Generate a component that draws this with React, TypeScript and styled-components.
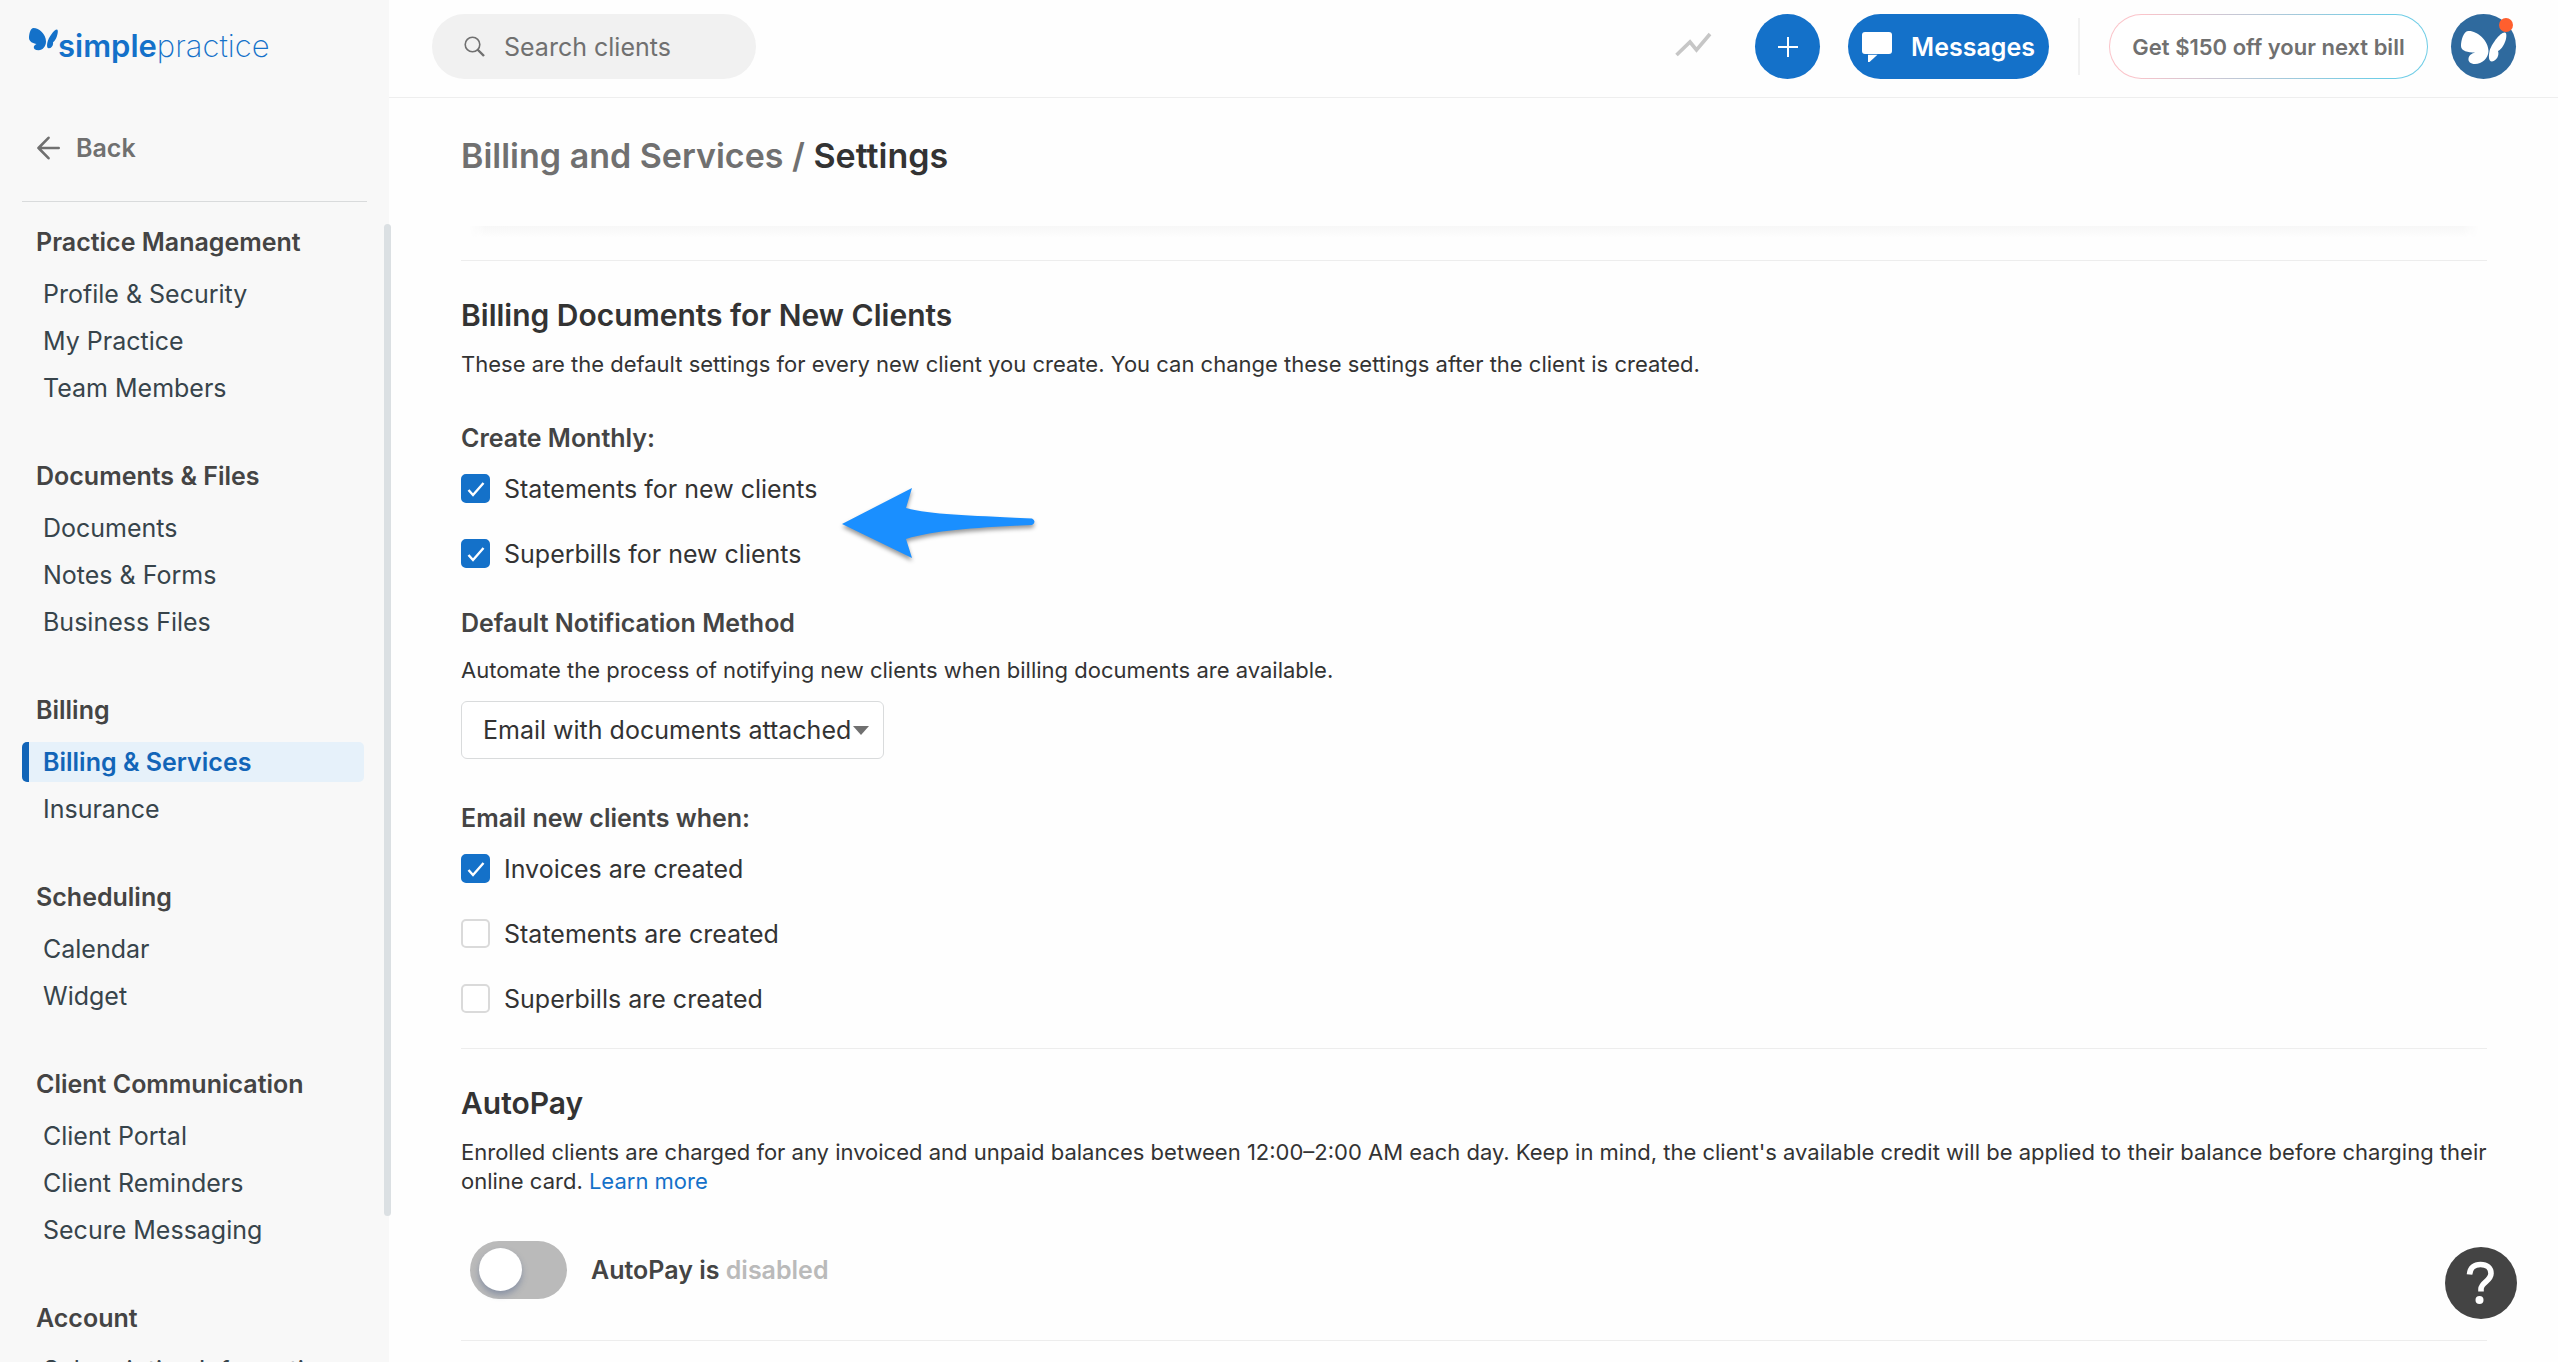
import React from "react";
import styled, { createGlobalStyle, css } from "styled-components";

const sans = '"Inter", "Noto Sans", "Liberation Sans", sans-serif';
const blue = "#1471c9";

const GlobalStyle = createGlobalStyle`
  *, *::before, *::after { box-sizing: border-box; }
  body {
    margin: 0;
    background: #fefefe;
    color: #333;
    font-family: ${sans};
    font-size: 25px;
    -webkit-font-smoothing: antialiased;
  }
  button, input, select { font: inherit; color: inherit; }
  h1, h2, h3, p, ul { margin: 0; padding: 0; }
  ul { list-style: none; }
`;

const Shell = styled.div`
  display: grid;
  grid-template-columns: 389px minmax(0, 1fr);
  height: 100vh;
  overflow: hidden;
`;

/* ---------- Sidebar ---------- */

const Sidebar = styled.aside`
  position: relative;
  display: flex;
  flex-direction: column;
  min-height: 0;
  background: #f8f8f8;
`;

const Brand = styled.a`
  display: flex;
  height: 98px;
  padding: 28px 0 0 29px;
  color: ${blue};
  text-decoration: none;
`;

const Wordmark = styled.span`
  font-size: 31px;
  line-height: 36px;
  font-weight: 200;

  strong { font-weight: 600; }
`;

const BackLink = styled.a`
  display: flex;
  align-items: center;
  gap: 16px;
  height: 104px;
  margin: 0 22px;
  padding: 0 15px 4px;
  border-bottom: 1px solid #d9dbdc;
  color: #707070;
  font-weight: 600;
  text-decoration: none;
`;

const Nav = styled.nav`
  flex: 1;
  min-height: 0;
  display: flex;
  flex-direction: column;
  gap: 48px;
  padding: 20px 25px 0 22px;
  overflow: hidden;
`;

const NavHeading = styled.h2`
  padding-left: 14px;
  margin-bottom: 12px;
  font-size: 25px;
  line-height: 40px;
  font-weight: 600;
  color: #444;
`;

const NavList = styled.ul`
  display: grid;
  gap: 7px;
`;

const NavLink = styled.a<{ $active?: boolean }>`
  display: block;
  padding-left: 14px;
  border-left: 7px solid transparent;
  border-radius: 5px;
  line-height: 40px;
  color: #37444b;
  text-decoration: none;
  white-space: nowrap;
  ${(p) =>
    p.$active &&
    css`
      border-left-color: #1265b8;
      background: #e6f1fa;
      color: #1265b8;
      font-weight: 600;
    `}
`;

const ScrollThumb = styled.div`
  position: absolute;
  z-index: 1;
  top: 224px;
  right: -2px;
  width: 7px;
  height: 992px;
  border-radius: 4px;
  background: #dbe0e3;
`;

/* ---------- Top bar ---------- */

const Main = styled.div`
  display: flex;
  flex-direction: column;
  min-height: 0;
`;

const TopBar = styled.header`
  flex: none;
  display: flex;
  align-items: flex-start;
  height: 98px;
  padding: 14px 42px 0 43px;
  border-bottom: 1px solid #eee;
`;

const SearchBox = styled.label`
  display: flex;
  align-items: center;
  gap: 19px;
  width: 324px;
  height: 65px;
  padding: 0 24px 0 32px;
  margin-right: auto;
  border-radius: 33px;
  background: #f1f1f1;
  color: #707070;
`;

const SearchInput = styled.input`
  flex: 1;
  min-width: 0;
  padding: 0;
  border: 0;
  outline: 0;
  background: none;

  &::placeholder { color: #707070; opacity: 1; }
`;

const TrendButton = styled.button`
  display: grid;
  place-items: center;
  height: 62px;
  margin-right: 43px;
  padding: 0;
  border: 0;
  background: none;
`;

const AddButton = styled.button`
  display: grid;
  place-items: center;
  width: 65px;
  height: 65px;
  margin-right: 28px;
  padding: 0;
  border: 0;
  border-radius: 50%;
  background: ${blue};
`;

const MessagesButton = styled.button`
  display: flex;
  align-items: center;
  justify-content: center;
  gap: 19px;
  width: 201px;
  height: 65px;
  padding: 0;
  border: 0;
  border-radius: 33px;
  background: ${blue};
  color: #fff;
  font-weight: 600;
`;

const Divider = styled.div`
  width: 2px;
  height: 57px;
  margin: 4px 29px 0;
  background: #f1f1f1;
`;

const PromoButton = styled.button`
  width: 319px;
  height: 65px;
  margin-right: 23px;
  padding: 0;
  border: 1px solid transparent;
  border-radius: 33px;
  background:
    linear-gradient(#fff, #fff) padding-box,
    linear-gradient(100deg, #fbc4ca 10%, #6fcde6 85%) border-box;
  color: #707070;
  font-size: 22px;
  font-weight: 600;
  white-space: nowrap;
`;

const Avatar = styled.button`
  position: relative;
  width: 65px;
  height: 65px;
  padding: 0;
  border: 0;
  border-radius: 50%;
  background: #2f6a9e;

  svg { display: block; }
`;

const Badge = styled.span`
  position: absolute;
  top: 4px;
  right: 3px;
  width: 14px;
  height: 14px;
  border-radius: 50%;
  background: #ff5f2e;
`;

/* ---------- Content ---------- */

const TitleBar = styled.div`
  flex: none;
  height: 128px;
  padding: 34px 72px 0;
`;

const PageTitle = styled.h1`
  font-size: 34px;
  line-height: 48px;
  font-weight: 600;
  color: #333;

  span { color: #707070; }
`;

const Scroller = styled.main`
  flex: 1;
  min-height: 0;
  padding: 0 71px 0 72px;
  overflow: hidden;
`;

const ScrollShade = styled.div`
  height: 34px;
  padding: 0 8px;

  &::before {
    content: "";
    display: block;
    height: 12px;
    background: linear-gradient(#f7f7f7, #fefefe);
    mask-image: linear-gradient(90deg, transparent, #000 16px calc(100% - 16px), transparent);
  }
`;

const Section = styled.section`
  padding: 30px 0 35px;
  border-top: 1px solid #ededed;
`;

const SectionTitle = styled.h2`
  font-size: 30px;
  line-height: 48px;
  font-weight: 600;
  color: #333;
`;

const Text = styled.p`
  padding-top: 11px;
  font-size: 22px;
  line-height: 29px;
`;

const TextLink = styled.a`
  color: ${blue};
  text-decoration: none;
`;

const Group = styled.fieldset`
  position: relative;
  min-width: 0;
  margin: 43px 0 0;
  padding: 0;
  border: 0;
  display: grid;
  gap: 36px;
`;

const groupTitle = css`
  display: block;
  padding: 0;
  font-size: 25px;
  line-height: 32px;
  font-weight: 600;
  color: #444;
`;

const Legend = styled.legend`
  ${groupTitle}
  margin: 0 0 20px;
`;

const FieldLabel = styled.label`
  ${groupTitle}
  margin: 39px 0 6px;
`;

const CheckRow = styled.label`
  display: flex;
  align-items: center;
  gap: 14px;
  width: max-content;
  height: 29px;
`;

const CheckCell = styled.span`
  display: grid;
  place-items: center;

  > * { grid-area: 1 / 1; }
  svg { pointer-events: none; }
`;

const CheckInput = styled.input`
  appearance: none;
  width: 29px;
  height: 29px;
  margin: 0;
  border: 2px solid #dadada;
  border-radius: 5px;
  background: #fff;

  &:checked { border-color: ${blue}; background: ${blue}; }
  &:not(:checked) + svg { visibility: hidden; }
`;

const SelectBox = styled.span`
  display: grid;
  align-items: center;
  width: 423px;
  margin-top: 16px;

  > * { grid-area: 1 / 1; }
  svg { justify-self: end; margin-right: 15px; pointer-events: none; }
`;

const Select = styled.select`
  appearance: none;
  width: 100%;
  height: 58px;
  padding: 0 30px 0 21px;
  border: 1px solid #d9dbdc;
  border-radius: 6px;
  background: #fff;
`;

const Pointer = styled.svg`
  position: absolute;
  left: 381px;
  top: 14px;
  filter: drop-shadow(0 3px 2px rgba(0, 0, 0, 0.4));
`;

const SwitchRow = styled.label`
  display: flex;
  align-items: center;
  gap: 24px;
  width: max-content;
  margin: 45px 0 6px 9px;
  font-weight: 600;
  color: #444;
`;

const Switch = styled.input`
  appearance: none;
  width: 97px;
  height: 58px;
  margin: 0;
  padding: 7px 9px;
  border-radius: 29px;
  background: #bababa;

  &::before {
    content: "";
    display: block;
    width: 43px;
    height: 43px;
    border-radius: 50%;
    background: #fff;
    box-shadow: 0 4px 6px rgba(80, 100, 140, 0.45);
  }
  &:checked { background: ${blue}; }
  &:checked::before { margin-left: auto; }
`;

const Muted = styled.span`
  color: #bababa;
`;

const HelpButton = styled.button`
  position: fixed;
  right: 41px;
  bottom: 43px;
  display: grid;
  place-items: center;
  width: 72px;
  height: 72px;
  padding: 0;
  border: 0;
  border-radius: 50%;
  background: #444;
`;

/* ---------- Drawings ---------- */

const Check = () => (
  <svg width="20" height="20" viewBox="0 0 20 20" fill="none" aria-hidden="true">
    <path d="M2.5 11 7 16 17.5 4" stroke="#fff" strokeWidth="2.4" />
  </svg>
);

const LogoMark = () => (
  <svg width="29" height="23" viewBox="0 0 29 23" fill={blue} aria-hidden="true">
    <path d="M4.500 0C10 0 17 6 17 13.500C17 18 14 22.200 9.500 22.200C6 22.200 4.600 20.500 4.800 19C5 17.600 6.300 16.800 7.600 16C4 15.500 0 13.500 0 10C0 6 1.500 0 4.500 0Z" />
    <path d="M28 1.500C29.500 1.800 28.800 7 27 10.500C26 12.500 24.800 13.600 24 14.300C24.600 17.500 22.500 20 19.800 20.300C17.800 20.400 17.800 17.500 18.400 14.500C19.500 9.500 25 1.500 28 1.500Z" />
  </svg>
);

const AvatarMark = () => (
  <svg width="65" height="65" viewBox="0 0 65 65" fill="#fff" aria-hidden="true">
    <path d="M17 17C25 16 37.500 26 37.500 37C37.500 44 31 50 24 50C19.500 50 17 47.500 17.500 44.500C18 41 21 39.500 24 38.500C17 38.500 10 37 10 32C10 26 12.500 17.500 17 17Z" />
    <path d="M54 18.500C56.500 19 55.500 27 52 32C50.500 34.500 49 36 47 37C48.500 41 46 46.500 41 47.500C37.500 47.700 37.500 42 38.500 37.500C40 31 49 18 54 18.500Z" />
  </svg>
);

const sections = [
  { title: "Practice Management", items: ["Profile & Security", "My Practice", "Team Members"] },
  { title: "Documents & Files", items: ["Documents", "Notes & Forms", "Business Files"] },
  { title: "Billing", items: ["Billing & Services", "Insurance"] },
  { title: "Scheduling", items: ["Calendar", "Widget"] },
  { title: "Client Communication", items: ["Client Portal", "Client Reminders", "Secure Messaging"] },
  { title: "Account", items: ["Subscription Information"] },
];

const Checkbox = ({ label, checked }: { label: string; checked?: boolean }) => (
  <CheckRow>
    <CheckCell>
      <CheckInput type="checkbox" defaultChecked={checked} />
      <Check />
    </CheckCell>
    {label}
  </CheckRow>
);

export default function App() {
  return (
    <>
      <GlobalStyle />
      <Shell>
        <Sidebar>
          <Brand href="#">
            <LogoMark />
            <Wordmark><strong>simple</strong>practice</Wordmark>
          </Brand>
          <BackLink href="#">
            <svg width="23" height="24" viewBox="0 0 23 24" fill="none" stroke="currentColor" strokeWidth="2.6" strokeLinecap="round" strokeLinejoin="round" aria-hidden="true">
              <path d="M21.700 12H1.500M11.500 1.800 1.500 12 11.500 22.200" />
            </svg>
            Back
          </BackLink>
          <Nav>
            {sections.map((s) => (
              <div key={s.title}>
                <NavHeading>{s.title}</NavHeading>
                <NavList>
                  {s.items.map((item) => (
                    <li key={item}>
                      <NavLink href="#" $active={item === "Billing & Services"}>{item}</NavLink>
                    </li>
                  ))}
                </NavList>
              </div>
            ))}
          </Nav>
          <ScrollThumb />
        </Sidebar>

        <Main>
          <TopBar>
            <SearchBox>
              <svg width="21" height="21" viewBox="0 0 21 21" fill="none" stroke="currentColor" aria-hidden="true">
                <circle cx="8.500" cy="8.500" r="7.300" strokeWidth="1.600" />
                <path d="M13.500 13.500 20 20" strokeWidth="2.400" />
              </svg>
              <SearchInput type="text" placeholder="Search clients" aria-label="Search clients" />
            </SearchBox>
            <TrendButton aria-label="Reports">
              <svg width="37" height="26" viewBox="0 0 37 26" fill="none" aria-hidden="true">
                <path d="M1.500 23 15 10 21.500 18 35 2" stroke="#c6c6c6" strokeWidth="3.600" />
              </svg>
            </TrendButton>
            <AddButton aria-label="Add">
              <svg width="20" height="20" viewBox="0 0 20 20" stroke="#fff" strokeWidth="2" aria-hidden="true">
                <path d="M10 0V20M0 10H20" />
              </svg>
            </AddButton>
            <MessagesButton>
              <svg width="30" height="30" viewBox="0 0 30 30" fill="#fff" aria-hidden="true">
                <rect width="30" height="22" rx="3" />
                <path d="M6 22.800H15.500L7.500 30H6Z" />
              </svg>
              Messages
            </MessagesButton>
            <Divider />
            <PromoButton>Get $150 off your next bill</PromoButton>
            <Avatar aria-label="Account">
              <AvatarMark />
              <Badge />
            </Avatar>
          </TopBar>

          <TitleBar>
            <PageTitle><span>Billing and Services /</span> Settings</PageTitle>
          </TitleBar>

          <Scroller>
            <ScrollShade />
            <Section>
              <SectionTitle>Billing Documents for New Clients</SectionTitle>
              <Text>
                These are the default settings for every new client you create. You can change these settings after the client is created.
              </Text>
              <Group>
                <Legend>Create Monthly:</Legend>
                <Checkbox label="Statements for new clients" checked />
                <Checkbox label="Superbills for new clients" checked />
                <Pointer width="196" height="72" viewBox="0 0 196 72" fill="#1a8fff" aria-hidden="true">
                  <path d="M0 36 70 0 64 20C90 27 130 27.500 190 30.500Q195 33.500 190 37C130 40 95 42 64 51L70 70Z" />
                </Pointer>
              </Group>
              <FieldLabel htmlFor="method">Default Notification Method</FieldLabel>
              <Text>Automate the process of notifying new clients when billing documents are available.</Text>
              <SelectBox>
                <Select id="method">
                  <option>Email with documents attached</option>
                </Select>
                <svg width="16" height="9" viewBox="0 0 16 9" aria-hidden="true">
                  <path d="M0 0H16L8 9Z" fill="#707070" />
                </svg>
              </SelectBox>
              <Group>
                <Legend>Email new clients when:</Legend>
                <Checkbox label="Invoices are created" checked />
                <Checkbox label="Statements are created" />
                <Checkbox label="Superbills are created" />
              </Group>
            </Section>
            <Section>
              <SectionTitle>AutoPay</SectionTitle>
              <Text>
                Enrolled clients are charged for any invoiced and unpaid balances between 12:00–2:00 AM each day. Keep in mind, the client's available credit will be applied to their balance before charging their online card.{" "}
                <TextLink href="#">Learn more</TextLink>
              </Text>
              <SwitchRow>
                <Switch type="checkbox" role="switch" />
                <span>AutoPay is <Muted>disabled</Muted></span>
              </SwitchRow>
            </Section>
            <Section />
          </Scroller>
        </Main>

        <HelpButton aria-label="Help">
          <svg width="30" height="46" viewBox="0 0 30 46" fill="none" aria-hidden="true">
            <path d="M3.500 14.500C4 7.500 8.500 4.500 14.500 4.500C21 4.500 25 8 25 13.500C25 21 15 22.500 15 29V31.500" stroke="#fff" strokeWidth="5.600" />
            <circle cx="13.500" cy="40" r="4" fill="#fff" />
          </svg>
        </HelpButton>
      </Shell>
    </>
  );
}
